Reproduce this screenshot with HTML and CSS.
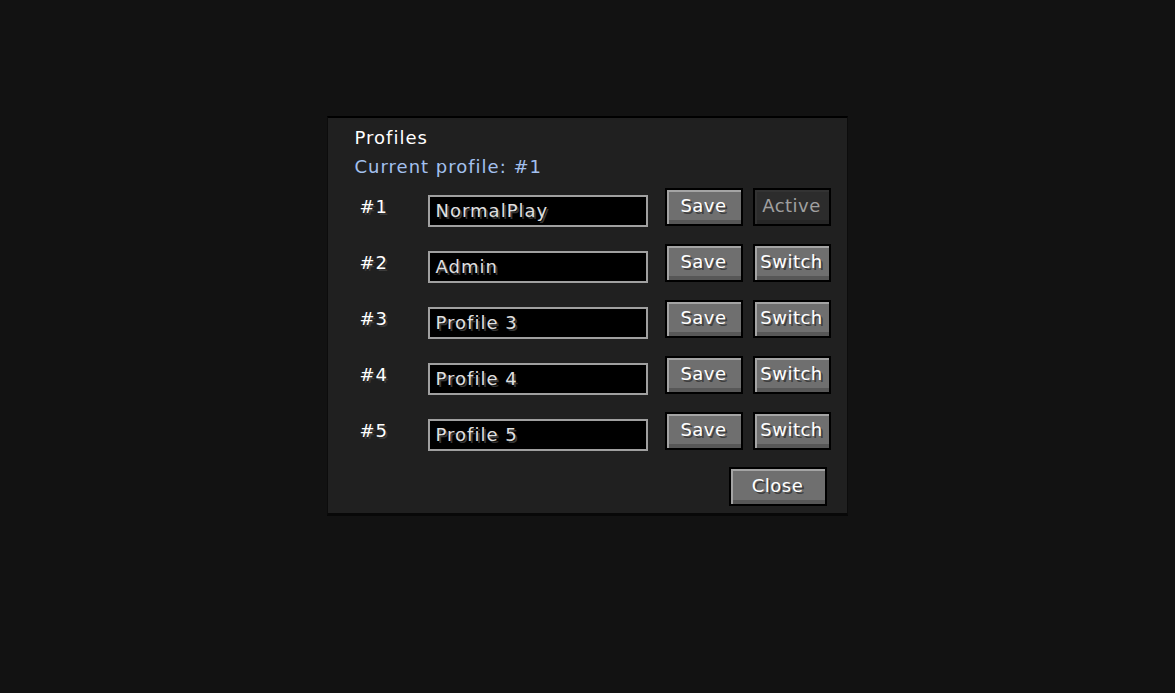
FILE: index.html
```html
<!DOCTYPE html>
<html lang="en">

<head>
  <meta charset="UTF-8">
  <meta name="viewport" content="width=device-width, initial-scale=1.0">
  <title>Profiles</title>
  <link rel="stylesheet" href="styles.css">
</head>

<body>
  <div class="screen">
    <div class="panel">
      <div class="title">Profiles</div>
      <div class="current">Current profile: #1</div>
      <ul class="rows">
        <li class="row">
          <span class="num">#1</span>
          <div class="field">NormalPlay</div>
          <button class="btn">Save</button>
          <button class="btn off">Active</button>
        </li>
        <li class="row">
          <span class="num">#2</span>
          <div class="field">Admin</div>
          <button class="btn">Save</button>
          <button class="btn">Switch</button>
        </li>
        <li class="row">
          <span class="num">#3</span>
          <div class="field">Profile 3</div>
          <button class="btn">Save</button>
          <button class="btn">Switch</button>
        </li>
        <li class="row">
          <span class="num">#4</span>
          <div class="field">Profile 4</div>
          <button class="btn">Save</button>
          <button class="btn">Switch</button>
        </li>
        <li class="row">
          <span class="num">#5</span>
          <div class="field">Profile 5</div>
          <button class="btn">Save</button>
          <button class="btn">Switch</button>
        </li>
      </ul>
      <div class="foot">
        <button class="btn close">Close</button>
      </div>
    </div>
  </div>
</body>

</html>
```

FILE: styles.css
```css
html,
body {
  margin: 0;
  padding: 0;
  height: 100%;
  background: #121212;
  font-family: "DejaVu Sans", "Liberation Sans", sans-serif;
  font-size: 18px;
  letter-spacing: 1px;
}

.screen {
  display: flex;
  justify-content: center;
  padding-top: 116px;
}

.panel {
  box-sizing: border-box;
  width: 521px;
  margin-left: -1px;
  background: #202020;
  border-top: 2px solid #000;
  border-bottom: 3px solid #080808;
  border-left: 1px solid #0c0c0c;
  border-right: 1px solid #0c0c0c;
  padding: 10px 16px 7px 27px;
}

.title {
  color: #fff;
  line-height: 20px;
}

.current {
  color: #a3c0ef;
  line-height: 20px;
  margin-top: 9px;
}

.rows {
  margin: 11px 0 0;
  padding: 0;
}

.row {
  list-style: none;
  display: flex;
  align-items: flex-start;
  height: 38px;
  margin-bottom: 18px;
}

.row:last-child {
  margin-bottom: 0;
}

.num {
  width: 68px;
  padding-left: 5px;
  margin-top: 9px;
  color: #fff;
  line-height: 20px;
  text-shadow: 2px 2px #3a3a3a;
}

.field {
  width: 220px;
  height: 32px;
  box-sizing: border-box;
  margin-top: 7px;
  margin-right: 17px;
  border: 2px solid #a0a0a0;
  background: #000;
  color: #e0e0e0;
  padding-left: 6px;
  line-height: 28px;
  text-shadow: 2px 2px #383838;
}

.btn {
  width: 78px;
  height: 38px;
  margin-right: 10px;
  padding: 0 0 3px;
  border: 2px solid #000;
  background: #6f6f6f;
  box-shadow: inset 2px 2px #a4a4a4, inset 0 -4px #575757;
  color: #fff;
  font: inherit;
  letter-spacing: 0.5px;
  text-shadow: 2px 2px #3f3f3f;
}

.btn:last-child {
  margin-right: 0;
}

.btn.off {
  background: #2c2c2c;
  box-shadow: inset 2px 2px #333, inset 0 -4px #262626;
  color: #a0a0a0;
  text-shadow: none;
}

.foot {
  display: flex;
  justify-content: flex-end;
  margin-top: 17px;
  padding-right: 4px;
}

.btn.close {
  width: 98px;
  height: 39px;
}
```
